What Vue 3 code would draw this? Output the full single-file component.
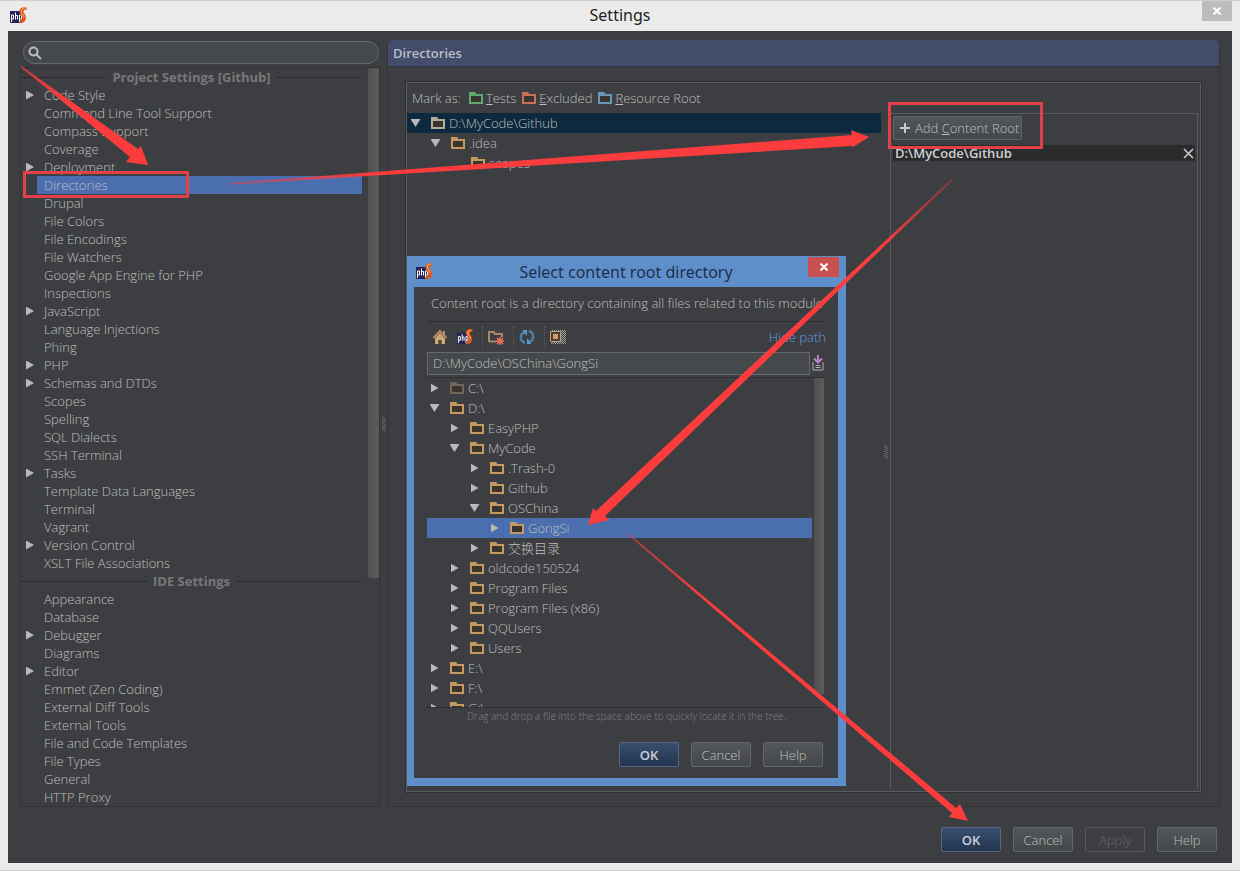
<script setup>
import { ref } from 'vue'

const path = ref('D:\\MyCode\\OSChina\\GongSi')
const query = ref('')

const groups = [
  {
    title: 'Project Settings [Github]',
    items: ['>Code Style', 'Command Line Tool Support', 'Compass Support', 'Coverage', '>Deployment', 'Directories', 'Drupal',
      'File Colors', 'File Encodings', 'File Watchers', 'Google App Engine for PHP', 'Inspections', '>JavaScript',
      'Language Injections', 'Phing', '>PHP', '>Schemas and DTDs', 'Scopes', 'Spelling', 'SQL Dialects', 'SSH Terminal',
      '>Tasks', 'Template Data Languages', 'Terminal', 'Vagrant', '>Version Control', 'XSLT File Associations'],
  },
  {
    title: 'IDE Settings',
    items: ['Appearance', 'Database', '>Debugger', 'Diagrams', '>Editor', 'Emmet (Zen Coding)', 'External Diff Tools',
      'External Tools', 'File and Code Templates', 'File Types', 'General', 'HTTP Proxy'],
  },
].map(g => ({
  title: g.title,
  items: g.items.map(s => ({ name: s.replace('>', ''), branch: s.startsWith('>') })),
}))

const marks = [
  { key: 'T', rest: 'ests', tone: 'green' },
  { key: 'E', rest: 'xcluded', tone: 'red' },
  { key: 'R', rest: 'esource Root', tone: 'blue' },
]

const roots = [
  { name: 'D:\\MyCode\\Github', depth: 0, state: 'open', tone: 'grey' },
  { name: '.idea', depth: 1, state: 'open', tone: 'tan' },
  { name: 'scopes', depth: 2, state: '', tone: 'tan' },
]

const tree = [
  ['C:\\', 0, 'shut', 'dim'], ['D:\\', 0, 'open'], ['EasyPHP', 1, 'shut'], ['MyCode', 1, 'open'],
  ['.Trash-0', 2, 'shut'], ['Github', 2, 'shut'], ['OSChina', 2, 'open'], ['GongSi', 3, 'shut'],
  ['交换目录', 2, 'shut'], ['oldcode150524', 1, 'shut'], ['Program Files', 1, 'shut'], ['Program Files (x86)', 1, 'shut'],
  ['QQUsers', 1, 'shut'], ['Users', 1, 'shut'], ['E:\\', 0, 'shut'], ['F:\\', 0, 'shut'], ['G:\\', 0, 'shut'],
].map(([name, depth, state, tone = 'tan']) => ({ name, depth, state, tone }))
</script>

<template>
  <div class="window">
    <svg class="defs" aria-hidden="true">
      <symbol id="folder" viewBox="0 0 14 12">
        <path d="M1 11V1h5l1 2h6v8z" fill="#3a342e" />
        <path d="M0 0h6l1.500 2H14v10H0zM2 4v6h10V4z" fill="currentColor" fill-rule="evenodd" />
      </symbol>
      <symbol id="php" viewBox="0 0 17 17">
        <path d="M0 4h12v12H0z" fill="#26245c" />
        <path d="M1.500 15V8H3.500V12H1.500M5.500 5.500V12.500M5.500 8.500H7.500V12.500M9.500 15V8H11.500V12H9.500" fill="none" stroke="#fff" />
        <path d="M16.500.5C12-.5 9 1.500 9.500 5c.4 2.500 2.700 3 2.500 5.500-.2 2-1.300 3-2.500 3.500v2c4 .5 6.500-2 6.500-5.500 0-3-2.500-4-2.500-6 0-1.300 1.200-2 3-1.500z" fill="#df5a1c" />
        <path d="M15 1c-3 0-4 1.500-3.500 4 .5 2 2.500 2.500 2.500 5" fill="none" stroke="#ffb469" />
      </symbol>
    </svg>

    <header class="titlebar">
      <svg class="logo"><use href="#php" /></svg>
      <h1>Settings</h1>
      <button class="close" aria-label="Close">
        <svg viewBox="0 0 8 8"><path d="M.5.5l7 7m0-7l-7 7" /></svg>
      </button>
    </header>

    <main class="body">
      <div class="panes">
        <aside class="side">
          <label class="search">
            <svg viewBox="0 0 14 14"><circle cx="5.500" cy="5.500" r="4" /><path d="M8.500 8.500l4.500 4.500" /></svg>
            <input v-model="query" type="text" aria-label="Search settings">
          </label>
          <div class="list">
            <div class="groups">
              <section v-for="g in groups" :key="g.title">
                <h2><span>{{ g.title }}</span></h2>
                <ul>
                  <li v-for="i in g.items" :key="i.name" :class="{ on: i.name === 'Directories' }">
                    <span class="arrow"><i v-if="i.branch" class="tri shut" /></span>
                    <span class="label">{{ i.name }}</span>
                  </li>
                </ul>
              </section>
            </div>
            <div class="track"><div class="thumb" /></div>
          </div>
        </aside>

        <div class="grip"><svg viewBox="0 0 4 14"><path d="M1 0v14M3 1v13" /></svg></div>

        <section class="page">
          <h2 class="pagehead">Directories</h2>
          <div class="frame">
            <div class="marks">
              <span class="markas">Mark as:</span>
              <button v-for="m in marks" :key="m.key" class="mark">
                <svg class="folder" :class="m.tone"><use href="#folder" /></svg><span><u>{{ m.key }}</u>{{ m.rest }}</span>
              </button>
            </div>
            <div class="split">
              <ul class="tree">
                <li v-for="(r, n) in roots" :key="r.name" :class="{ root: n === 0 }" :style="{ paddingLeft: r.depth * 20 + 'px' }">
                  <span class="twist"><i v-if="r.state" class="tri" :class="r.state" /></span>
                  <svg class="folder" :class="r.tone"><use href="#folder" /></svg>
                  <span>{{ r.name }}</span>
                </li>
              </ul>
              <div class="grip inner"><svg viewBox="0 0 4 14"><path d="M1 0v14M3 1v13" /></svg></div>
              <div class="content">
                <div class="addrow">
                  <button class="btn add">
                    <svg viewBox="0 0 10 10"><path d="M5 0v10M0 5h10" /></svg>
                    <span>Add <u>C</u>ontent Root</span>
                  </button>
                </div>
                <div class="rootrow">
                  <strong>D:\MyCode\Github</strong>
                  <button class="remove" aria-label="Remove content root">
                    <svg viewBox="0 0 8 8"><path d="M0 0l8 8m0-8l-8 8" /></svg>
                  </button>
                </div>
              </div>
            </div>
          </div>
        </section>
      </div>

      <footer class="actions">
        <button class="btn primary">OK</button>
        <button class="btn">Cancel</button>
        <button class="btn" disabled>Apply</button>
        <button class="btn">Help</button>
      </footer>
    </main>

    <div class="dialog" role="dialog" aria-label="Select content root directory">
      <header class="dlghead">
        <svg class="logo"><use href="#php" /></svg>
        <h2>Select content root directory</h2>
        <button class="close" aria-label="Close">
          <svg viewBox="0 0 8 8"><path d="M.5.5l7 7m0-7l-7 7" /></svg>
        </button>
      </header>
      <div class="dlgbody">
        <p class="intro">Content root is a directory containing all files related to this module</p>
        <div class="tools">
          <button aria-label="Home">
            <svg viewBox="0 0 16 16"><path d="M1.500 9L8 2l6.500 7M12 2v4" fill="none" stroke="#b98a62" stroke-width="2" /><path d="M3 9.500l5-5.500 5 5.500V15H9.500v-4h-3v4H3z" fill="#d0a675" /></svg>
          </button>
          <button aria-label="Project directory"><svg viewBox="0 0 17 17"><use href="#php" /></svg></button>
          <hr>
          <button aria-label="New folder">
            <svg viewBox="0 0 16 16"><path d="M1 13V3h5l1 2h7v3M1 12.500h7" fill="none" stroke="#a98963" stroke-width="2" /><path d="M12 8v8M8 12h8M9 9l6 6m0-6l-6 6" stroke="#e8705c" stroke-width="1.500" /></svg>
          </button>
          <hr>
          <button aria-label="Refresh">
            <svg viewBox="0 0 16 16"><path d="M6 14C0 12 1 4 6 3.500M10 2c6 2 5 10 0 10.500" fill="none" stroke="#4a80a8" stroke-width="2.500" /><path d="M3.500 1H8v6zM12.500 15H8V9z" fill="#5b9cc9" /></svg>
          </button>
          <hr>
          <button aria-label="Show hidden files">
            <svg viewBox="0 0 16 14"><path d="M2 .5h14M10 2.500h6M10 4.500h6M10 6.500h6M10 8.500h6M10 10.500h6M2 12.500h14" stroke="#a3a19e" stroke-dasharray="1 1" /><path d="M11 1.500h5M11 3.500h5M11 5.500h5M11 7.500h5M11 9.500h5M11 11.500h5M1 13.500h15" stroke="#a3a19e" stroke-dasharray="1 1" /><path d="M.5 1.500h10v10H.5z" fill="#4a4038" stroke="#b5a08a" /><path d="M3 4h5v5H3z" fill="#d99a5f" /></svg>
          </button>
          <a href="#">Hide path</a>
        </div>
        <div class="pathrow">
          <input v-model="path" type="text" aria-label="Path">
          <button aria-label="Path history">
            <svg viewBox="0 0 12 16"><path d="M6 0v7M2 3.500l4 4 4-4" fill="none" stroke="#bb83cb" stroke-width="2" /><path d="M1 7v8h10V7M3.500 10.500h5M3.500 12.500h5" fill="none" stroke="#b0b0b0" /></svg>
          </button>
        </div>
        <div class="files">
          <ul class="tree">
            <li v-for="f in tree" :key="f.name" :class="{ on: f.name === 'GongSi' }" :style="{ paddingLeft: f.depth * 20 + 'px' }">
              <span class="twist"><i class="tri" :class="f.state" /></span>
              <svg class="folder" :class="f.tone"><use href="#folder" /></svg>
              <span>{{ f.name }}</span>
            </li>
          </ul>
          <div class="track"><div class="thumb" /></div>
        </div>
        <p class="hint">Drag and drop a file into the space above to quickly locate it in the tree.</p>
        <footer class="dlgactions">
          <button class="btn primary">OK</button>
          <button class="btn">Cancel</button>
          <button class="btn">Help</button>
        </footer>
      </div>
    </div>

    <svg class="notes" viewBox="0 0 1240 871" aria-hidden="true">
      <defs>
        <linearGradient id="f1" gradientUnits="userSpaceOnUse" x1="21" y1="66" x2="70" y2="104"><stop stop-color="#fb3c3c" stop-opacity=".7" /><stop offset="1" stop-color="#fb3c3c" /></linearGradient>
        <linearGradient id="f2" gradientUnits="userSpaceOnUse" x1="230" y1="183" x2="380" y2="172"><stop stop-color="#fb3c3c" stop-opacity=".5" /><stop offset="1" stop-color="#fb3c3c" /></linearGradient>
        <linearGradient id="f3" gradientUnits="userSpaceOnUse" x1="953" y1="179" x2="880" y2="247"><stop stop-color="#fb3c3c" stop-opacity=".3" /><stop offset="1" stop-color="#fb3c3c" /></linearGradient>
        <linearGradient id="f4" gradientUnits="userSpaceOnUse" x1="628" y1="534" x2="700" y2="595"><stop stop-color="#fb3c3c" stop-opacity=".6" /><stop offset="1" stop-color="#fb3c3c" /></linearGradient>
      </defs>
      <path d="M20.500 67L130 157 126 162 148 165 141 146 138 149 21.500 66z" fill="url(#f1)" />
      <path d="M230 184.500L852 146 853 147 869 137 851 130 852 135 230 183z" fill="url(#f2)" />
      <path d="M952 178.500L596 511 593 508 588 525 609 520 605 516 953.500 179.500z" fill="url(#f3)" />
      <path d="M627.500 534.500L952 813 949 817 968 821 960 804 956 808 628.500 533.500z" fill="url(#f4)" />
      <path d="M24.500 172.500h163v24h-163zM889.500 103.500h152v44h-152z" fill="none" stroke="#e2414a" stroke-width="3" />
    </svg>
  </div>
</template>

<style>
body { margin: 0; background: #ebebeb; }
</style>

<style scoped>
* { box-sizing: border-box; }
.window {
  position: relative; display: flex; flex-direction: column; min-height: 100vh;
  padding: 0 8px 7px; background: #ebebeb; border: 1px solid #cfcfcf; border-width: 1px 0;
  font: 300 13px/18px "Open Sans", "Noto Sans CJK SC", sans-serif; color: #bfbfbf;
}
.defs { position: absolute; width: 0; height: 0; }
h1, h2, p, ul { margin: 0; padding: 0; list-style: none; font-size: 13px; font-weight: 300; }
button, input { font: inherit; color: inherit; padding: 0; border: 0; background: none; }
svg { flex: none; }
.titlebar { display: flex; height: 30px; justify-content: center; align-items: center; position: relative; }
.titlebar h1 { font: 400 16px/28px "Noto Sans", sans-serif; height: 30px; color: #222; }
.logo { position: absolute; left: 2px; top: 6px; width: 17px; height: 17px; }
.close { position: absolute; right: 0; top: 0; width: 30px; height: 20px; background: #bcbcbc; display: grid; place-items: center; }
.close svg { width: 8px; height: 8px; stroke: #fff; stroke-width: 2; fill: none; }
.body { flex: 1; background: #3d3e41; display: flex; flex-direction: column; padding: 9px 12px 11px; }
.panes { flex: 1; display: flex; }
.side { flex: 0 1 360px; display: flex; flex-direction: column; padding-top: 1px; }
.search { display: flex; align-items: center; height: 23px; margin: 0 1px 3px 3px; padding-left: 4px; gap: 6px; border: 1px solid #686b6d; border-radius: 12px; background: #45494b; }
.search svg { width: 14px; height: 14px; fill: none; stroke: #c0c0c0; stroke-width: 2; }
.search input { flex: 1; outline: 0; }
.list { flex: 1; display: flex; border: 1px solid #333336; }
.groups { flex: 1; }
.groups h2 { display: flex; align-items: center; gap: 6px; height: 18px; line-height: 18px; font-weight: 700; color: #77777a; }
.groups h2::before, .groups h2::after { content: ''; flex: 1; height: 1px; background: #2c2c2e; }
.groups li { display: flex; height: 18px; align-items: center; }
.arrow { width: 16px; height: 18px; padding-left: 5px; display: flex; align-items: center; }
.label { flex: 1; padding-left: 7px; }
.on .label { background: #4b6eaf; }
.tri { display: block; background: #b9b9b9; }
.tri.shut { width: 8px; height: 9px; clip-path: polygon(0 0, 100% 50%, 0 100%); }
.tri.open { width: 10px; height: 8px; clip-path: polygon(0 0, 100% 0, 50% 100%); }
.list .track { width: 17px; padding-left: 6px; }
.list .thumb { width: 11px; height: 510px; background: linear-gradient(90deg, #505052, #5c5c5b); border-radius: 2px; }
.grip { width: 7px; display: flex; align-items: center; justify-content: center; }
.grip svg { width: 4px; height: 14px; stroke: #87878a; stroke-dasharray: 1 1; fill: none; }
.page { flex: 1; border: 1px solid #333336; border-top: 0; border-radius: 6px 6px 0 0; display: flex; flex-direction: column; }
.pagehead { height: 27px; line-height: 27px; padding-left: 5px; background: #434d69; border-bottom: 1px solid #2d3449; border-radius: 5px 5px 0 0; font-weight: 600; color: #b9bec8; }
.frame { flex: 1; display: flex; flex-direction: column; margin: 15px 18px 14px; border: 1px solid #595c5e; outline: 1px solid #303033; }
.marks { display: flex; align-items: center; height: 30px; padding-left: 5px; gap: 6px; }
.markas { margin-right: 2px; }
.mark { display: flex; align-items: center; gap: 3px; }
.folder { width: 14px; height: 12px; color: #c49a62; }
.folder.green { color: #62a871; } .folder.red { color: #c9705b; } .folder.blue { color: #6599b8; }
.folder.grey { color: #b5aa96; } .folder.dim { color: #736557; }
.split { flex: 1; display: flex; }
.tree { flex: 1; }
.tree li { display: flex; height: 20px; align-items: center; }
.twist { width: 17px; display: flex; justify-content: center; margin-right: 7px; }
.tree .folder { margin-right: 4px; }
.split .tree li.root { background: #0d293e; }
.inner { width: 9px; }
.content { flex: 0 0 308px; border: 1px solid #595c5e; border-width: 1px 1px 0; margin: 0 2px 2px 0; }
.addrow { padding: 2px 2px 5px; }
.btn { width: 60px; height: 25px; border: 1px solid #63676a; border-radius: 2px; background: linear-gradient(#53575a, #434749); color: #c0c0c0; }
.btn.primary { background: linear-gradient(#384f6f, #233550); border-color: #56687f; font-weight: 600; color: #cdd1d8; }
.btn:disabled { background: none; color: #69696b; border-color: #56595b; }
.btn.add { width: auto; height: 24px; display: flex; align-items: center; gap: 5px; padding: 0 2px 0 6px; }
.add svg { width: 10px; height: 10px; stroke: #c8c8c8; stroke-width: 2; }
.rootrow { display: flex; justify-content: space-between; align-items: center; height: 16px; margin: 0 2px; padding: 0 2px; background: #2a2b2d; color: #d0d0d0; }
.rootrow strong { font-weight: 600; }
.remove { display: grid; }
.remove svg { width: 9px; height: 9px; stroke: #c7c7c7; stroke-width: 1.500; overflow: visible; }
.actions { display: flex; justify-content: flex-end; gap: 12px; padding: 20px 3px 0 0; }

.dialog { position: absolute; left: 407px; top: 255px; width: 439px; padding: 0 8px 8px 7px; background: #5f8fcb; }
.dlghead { height: 31px; display: flex; align-items: center; justify-content: center; }
.dlghead h2 { font: 400 16px/30px "Noto Sans", sans-serif; color: #1d2f4c; }
.dlghead .logo { left: 9px; top: 7px; }
.dlghead .close { right: 7px; top: 1px; width: 31px; background: #c75050; }
.dlgbody { background: #3d3e41; padding: 7px 14px 11px 13px; }
.intro { height: 27px; padding-left: 4px; white-space: nowrap; }
.tools { display: flex; align-items: center; height: 30px; border-top: 1px solid #2d2d2f; padding-left: 5px; }
.tools button { display: grid; width: 16px; height: 16px; margin-right: 9px; }
.tools button svg { width: 16px; height: 16px; }
.tools hr { width: 1px; height: 22px; margin: 0 5px 0 0; border: 0; border-left: 1px dotted #5d5d60; }
.tools a { margin: 0 -2px 0 auto; color: #6699e2; text-decoration: none; }
.pathrow { display: flex; align-items: center; gap: 2px; height: 24px; }
.pathrow input { flex: 1; min-width: 0; height: 23px; padding: 0 5px; border: 1px solid #686b6d; background: #45494b; outline: 0; }
.pathrow button { width: 12px; height: 16px; display: grid; }
.pathrow svg { width: 12px; height: 16px; }
.files { display: flex; height: 331px; overflow: hidden; margin-top: 2px; border: 1px solid #303033; border-width: 1px 0; }
.files .tree li.on { background: #4b6eaf; }
.files .twist { width: 15px; margin-right: 8px; }
.files .track { padding-left: 2px; }
.files .thumb { width: 10px; height: 316px; background: linear-gradient(90deg, #4f4f51, #5c5c5b); }
.hint { padding-left: 40px; font-size: 10px; line-height: 16px; color: #808085; }
.dlgactions { display: flex; justify-content: flex-end; gap: 12px; padding: 18px 1px 0 0; }
.notes { position: absolute; left: 0; top: -1px; width: 1240px; height: 871px; pointer-events: none; }
</style>
